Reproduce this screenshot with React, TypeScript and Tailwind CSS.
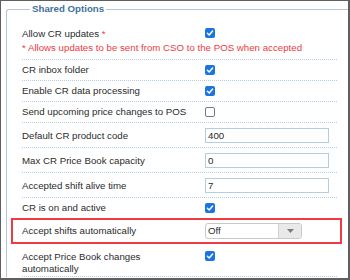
import type { ReactNode } from 'react'

function Check({ on = true }: { on?: boolean }) {
  if (!on)
    return (
      <span className="block w-[10px] h-[10px] rounded-[2px] border border-[#7a7a7a] bg-white" />
    )
  return (
    <span className="flex items-center justify-center w-[10px] h-[10px] rounded-[2px] bg-[#1b74e4]">
      <svg width="8" height="8" viewBox="0 0 8 8">
        <path
          d="M1.4 4.2 L3.2 6 L6.6 2"
          fill="none"
          stroke="white"
          strokeWidth="1.5"
          strokeLinecap="round"
          strokeLinejoin="round"
        />
      </svg>
    </span>
  )
}

function TextBox({ value }: { value: string }) {
  return (
    <div className="w-[124px] h-[15px] border border-[#b5cde2] bg-white px-[2px] flex items-center">
      {value}
    </div>
  )
}

function Row({
  label,
  children,
  input = false,
  last = false,
}: {
  label: ReactNode
  children: ReactNode
  input?: boolean
  last?: boolean
}) {
  return (
    <div
      className={
        'flex ' +
        (input ? 'items-center pt-[5px] pb-[4px] ' : 'items-start py-[4px] ') +
        (last ? '' : 'border-b border-dotted border-[#b3cde6]')
      }
    >
      <div className="w-[183px] pr-[8px]">{label}</div>
      <div className={input ? '' : 'pt-[1px]'}>{children}</div>
    </div>
  )
}

export default function App() {
  return (
    <div className="w-[350px] h-[280px] overflow-hidden bg-white border-t border-l border-r-2 border-b-2 border-[#5f5f5f] font-['Liberation_Sans',Arial,sans-serif] text-[9.7px] leading-[12px] text-[#2b2b2b]">
      <fieldset className="ml-[5px] mt-[1px] w-[360px] border-t border-l border-[#b8c6d3] rounded-tl-[3px] pl-[15px] pt-[8px]">
        <legend className="ml-[8px] px-[2px] font-bold text-[#41709f] leading-[14px]">
          Shared Options
        </legend>
        <div className="w-[315px]">
          <div className="pt-[4px] pb-[5px] border-b border-dotted border-[#b3cde6]">
            <div className="flex items-start">
              <div className="w-[183px]">
                Allow CR updates <span className="text-[#ee3a43]">*</span>
              </div>
              <Check />
            </div>
            <div className="mt-[2px] text-[#ee3a43]">
              * Allows updates to be sent from CSO to the POS when accepted
            </div>
          </div>
          <Row label="CR inbox folder">
            <Check />
          </Row>
          <Row label="Enable CR data processing">
            <Check />
          </Row>
          <Row label="Send upcoming price changes to POS">
            <Check on={false} />
          </Row>
          <Row label="Default CR product code" input>
            <TextBox value="400" />
          </Row>
          <Row label="Max CR Price Book capacity" input>
            <TextBox value="0" />
          </Row>
          <Row label="Accepted shift alive time" input>
            <TextBox value="7" />
          </Row>
          <Row label="CR is on and active" last>
            <Check />
          </Row>
          <div className="-ml-[11px] -mr-[5px] h-[26px] border-2 border-[#ee3a43] pl-[9px] pr-[3px] flex items-center">
            <div className="w-[183px]">Accept shifts automatically</div>
            <div className="w-[97px] h-[16px] border border-[#c9c9c9] rounded-[3px] flex overflow-hidden">
              <div className="flex-1 pl-[2px] flex items-center">Off</div>
              <div className="w-[23px] bg-[#e9e9e9] border-l border-[#d3d3d3] flex items-center justify-center">
                <svg width="7" height="4" viewBox="0 0 7 4">
                  <path d="M0 0 L7 0 L3.5 4 Z" fill="#7d7d7d" />
                </svg>
              </div>
            </div>
          </div>
          <div className="flex items-start pt-[7px] pb-[2px] border-b border-dotted border-[#b3cde6] leading-[11.5px]">
            <div className="w-[183px] pr-[8px]">
              Accept Price Book changes automatically
            </div>
            <Check />
          </div>
        </div>
      </fieldset>
    </div>
  )
}
